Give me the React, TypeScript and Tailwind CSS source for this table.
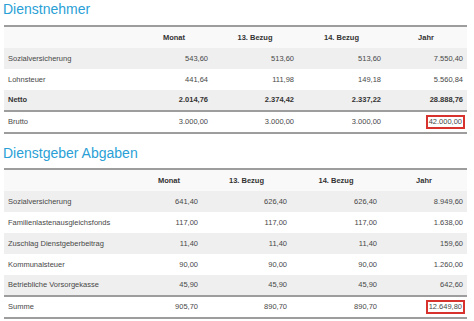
import { FC } from "react";

type Row = { label: string; values: string[]; bold?: boolean; shade?: boolean };

const employee: Row[] = [
  { label: "Sozialversicherung", values: ["543,60", "513,60", "513,60", "7.550,40"], shade: true },
  { label: "Lohnsteuer", values: ["441,64", "111,98", "149,18", "5.560,84"] },
  { label: "Netto", values: ["2.014,76", "2.374,42", "2.337,22", "28.888,76"], bold: true, shade: true },
];

const employer: Row[] = [
  { label: "Sozialversicherung", values: ["641,40", "626,40", "626,40", "8.949,60"], shade: true },
  { label: "Familienlastenausgleichsfonds", values: ["117,00", "117,00", "117,00", "1.638,00"] },
  { label: "Zuschlag Dienstgeberbeitrag", values: ["11,40", "11,40", "11,40", "159,60"], shade: true },
  { label: "Kommunalsteuer", values: ["90,00", "90,00", "90,00", "1.260,00"] },
  { label: "Betriebliche Vorsorgekasse", values: ["45,90", "45,90", "45,90", "642,60"], shade: true },
];

const heads = ["Monat", "13. Bezug", "14. Bezug", "Jahr"];

const Table: FC<{ widths: number[]; rows: Row[]; total: Row }> = ({ widths, rows, total }) => (
  <table className="w-[463px] table-fixed border-collapse text-[7.5px] text-[#484848]">
    <colgroup>
      {widths.map((w, i) => (
        <col key={i} style={{ width: w }} />
      ))}
    </colgroup>
    <thead>
      <tr className="h-[22px] bg-[#f9f9f9] border-t-2 border-[#9d9d9d]">
        <th />
        {heads.map((h) => (
          <th key={h} className="font-bold text-[#333] text-center">{h}</th>
        ))}
      </tr>
    </thead>
    <tbody>
      {rows.map((r) => (
        <tr key={r.label} className={`h-[21px] ${r.shade ? "bg-[#efefef]" : "bg-white"} ${r.bold ? "font-bold text-[#333]" : ""}`}>
          <td className="pl-[4px]">{r.label}</td>
          {r.values.map((v, i) => (
            <td key={i} className="text-right pr-[4px]">{v}</td>
          ))}
        </tr>
      ))}
      <tr className="h-[22px] border-t-2 border-b-2 border-[#9d9d9d]">
        <td className="pl-[4px]">{total.label}</td>
        {total.values.map((v, i) =>
          i === 3 ? (
            <td key={i} className="text-right pr-[2px]">
              <span className="inline-block border-2 border-[#d8322e] px-[1px] leading-[10px]">{v}</span>
            </td>
          ) : (
            <td key={i} className="text-right pr-[4px]">{v}</td>
          )
        )}
      </tr>
    </tbody>
  </table>
);

const App: FC = () => (
  <div className="w-[474px] h-[321px] bg-white px-[4px] font-['Liberation_Sans',Arial,sans-serif] overflow-hidden">
    <h2 className="mt-[1px] mb-[8px] text-[14px] leading-[16px] text-[#2a9fd6] -ml-[1px]">Dienstnehmer</h2>
    <Table
      widths={[132, 76, 86, 87, 82]}
      rows={employee}
      total={{ label: "Brutto", values: ["3.000,00", "3.000,00", "3.000,00", "42.000,00"] }}
    />
    <h2 className="mt-[11px] mb-[7px] text-[14px] leading-[16px] text-[#2a9fd6] -ml-[1px]">Dienstgeber Abgaben</h2>
    <Table
      widths={[132, 66, 89, 90, 86]}
      rows={employer}
      total={{ label: "Summe", values: ["905,70", "890,70", "890,70", "12.649,80"] }}
    />
  </div>
);

export default App;
